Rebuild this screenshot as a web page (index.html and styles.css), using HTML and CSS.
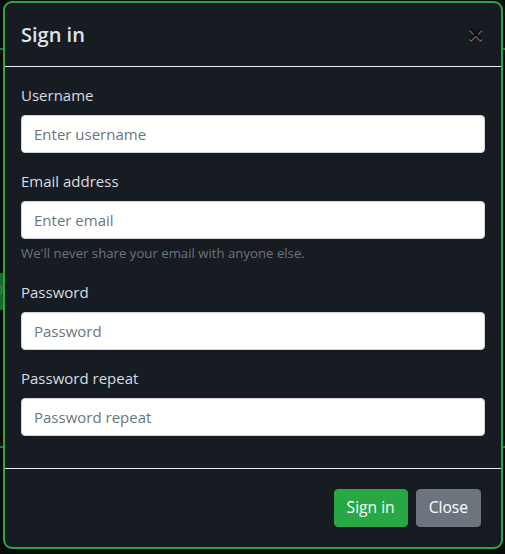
FILE: index.html
```html
<!DOCTYPE html>
<html lang="en">
<head>
<meta charset="utf-8">
<title>Sign in</title>
<link rel="stylesheet" href="styles.css">
</head>
<body>
<div class="page">
  <div class="topbar"></div>
  <div class="side-btn"><span class="side-mark"></span></div>
  <div class="bottom-line"></div>
</div>
<div class="backdrop"></div>
<div class="modal">
  <div class="modal-header">
    <h5 class="modal-title">Sign in</h5>
    <button class="close" type="button" aria-label="Close">×</button>
  </div>
  <form class="modal-body">
    <div class="form-group">
      <label>Username</label>
      <input class="form-control" type="text" placeholder="Enter username">
    </div>
    <div class="form-group">
      <label>Email address</label>
      <input class="form-control" type="email" placeholder="Enter email">
      <small class="form-text">We'll never share your email with anyone else.</small>
    </div>
    <div class="form-group">
      <label>Password</label>
      <input class="form-control" type="password" placeholder="Password">
    </div>
    <div class="form-group">
      <label>Password repeat</label>
      <input class="form-control" type="password" placeholder="Password repeat">
    </div>
  </form>
  <div class="modal-footer">
    <button class="btn btn-success" type="button">Sign in</button>
    <button class="btn btn-secondary" type="button">Close</button>
  </div>
</div>
</body>
</html>
```
FILE: styles.css
```css
* { box-sizing: border-box; }
html, body {
  margin: 0;
  height: 100%;
}
body {
  background: #0b0e12;
  font-family: "Open Sans", "Noto Sans", sans-serif;
  font-size: 16px;
  line-height: 1.5;
  color: #d6dde4;
  overflow: hidden;
}
.page {
  position: relative;
  height: 554px;
}
.topbar {
  height: 50px;
  border-bottom: 2px solid #28a745;
}
.side-btn {
  position: absolute;
  left: -30px;
  top: 273px;
  width: 34px;
  height: 37px;
  background: #1f8f36;
}
.side-mark {
  position: absolute;
  right: 2px;
  top: 12px;
  width: 3px;
  height: 10px;
  border: 1px solid #8a9aa6;
  border-left: 0;
  border-radius: 0 3px 3px 0;
}
.bottom-line {
  position: absolute;
  left: 0;
  right: 0;
  top: 446px;
  border-top: 2px solid #28a745;
}
.backdrop {
  position: absolute;
  inset: 0;
  background: rgba(0, 0, 0, 0.25);
}
.modal {
  position: absolute;
  left: 3px;
  top: 1px;
  width: 500px;
  background: #171b22;
  border: 2px solid #2ea544;
  border-radius: 9px;
}
.modal-header {
  display: flex;
  align-items: flex-start;
  justify-content: space-between;
  padding: 17px 16px 16px;
  border-bottom: 1px solid #e9ecef;
}
.modal-title {
  margin: 0;
  font-size: 20px;
  font-weight: 600;
  line-height: 30px;
  color: #dde4ea;
}
.close {
  background: transparent;
  border: 0;
  padding: 0 16px 0 0;
  margin: 3px -16px 0 auto;
  font-family: "DejaVu Sans", sans-serif;
  font-size: 22px;
  font-weight: 700;
  line-height: 1;
  color: #000;
  text-shadow: 0 1px 0 #fff;
  opacity: 0.5;
  cursor: pointer;
}
.modal-body {
  display: flex;
  flex-direction: column;
  padding: 16px;
  margin: 0;
}
.form-group {
  display: flex;
  flex-direction: column;
  margin-bottom: 16px;
}
label {
  margin-bottom: 8px;
  font-size: 15px;
  line-height: 24px;
}
.form-control {
  height: 38px;
  padding: 6px 12px;
  font-family: inherit;
  font-size: 15px;
  line-height: 1.5;
  color: #495057;
  background: #fff;
  border: 1px solid #ced4da;
  border-radius: 4px;
}
.form-control::placeholder {
  color: #6c757d;
  opacity: 1;
}
.form-text {
  margin-top: 4px;
  font-size: 13.2px;
  line-height: 21px;
  color: #6c757d;
}
.modal-footer {
  display: flex;
  justify-content: flex-end;
  align-items: center;
  padding: 16px;
  border-top: 1px solid #e9ecef;
}
.btn {
  margin: 4px;
  height: 38px;
  padding: 6px 12px;
  font-family: inherit;
  font-size: 15.6px;
  line-height: 1.5;
  border: 1px solid transparent;
  border-radius: 4px;
  color: #fff;
  cursor: pointer;
}
.btn-success {
  background: #28a745;
  border-color: #28a745;
}
.btn-secondary {
  background: #6c757d;
  border-color: #6c757d;
}
```
